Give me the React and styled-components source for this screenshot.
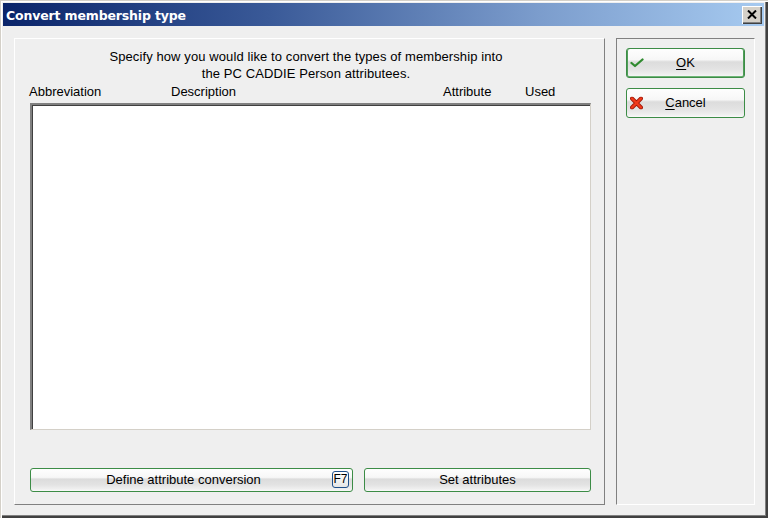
import React from "react";
import styled, { createGlobalStyle } from "styled-components";

const Global = createGlobalStyle`
  html, body { margin: 0; padding: 0; background: #efefef; }
  body { width: 768px; height: 518px; overflow: hidden; font-family: "Liberation Sans", Arial, sans-serif; }
  * { box-sizing: border-box; }
`;

const Window = styled.div`
  width: 768px;
  height: 518px;
  background: #efefef;
  padding: 3px 4px 4px 3px;
  display: flex;
  flex-direction: column;
  box-shadow: inset 1px 1px 0 #d4d0c8, inset 2px 2px 0 #ffffff,
    inset -1px -1px 0 #404040, inset -2px -2px 0 #404040, inset -3px -3px 0 #808080;
`;

const TitleBar = styled.div`
  height: 23px;
  flex: none;
  display: flex;
  align-items: center;
  justify-content: space-between;
  padding: 0 2px 0 3px;
  background: linear-gradient(to right, #0a246a 0%, #3a5a98 35%, #7b9ccc 70%, #a6caf0 100%);
`;

const Title = styled.div`
  color: #ffffff;
  font-family: "DejaVu Sans", Tahoma, sans-serif;
  font-weight: bold;
  font-size: 12.5px;
  letter-spacing: -0.15px;
  padding-top: 1px;
`;

const CloseButton = styled.div`
  width: 20px;
  height: 18px;
  background: #d4d0c8;
  display: flex;
  align-items: center;
  justify-content: center;
  box-shadow: inset 1px 1px 0 #ffffff, inset -1px -1px 0 #404040, inset -2px -2px 0 #808080;
`;

const Body = styled.div`
  flex: 1;
  display: flex;
  gap: 11px;
  padding: 12px 9px 9px 11px;
`;

const LeftPanel = styled.div`
  width: 591px;
  height: 467px;
  border-top: 1px solid #ffffff;
  border-left: 1px solid #ffffff;
  border-right: 1px solid #808080;
  border-bottom: 1px solid #808080;
  padding: 9px 13px 0 15px;
  display: flex;
  flex-direction: column;
`;

const Intro = styled.div`
  font-size: 13px;
  line-height: 17px;
  color: #000;
  text-align: center;
  letter-spacing: 0.1px;
  padding-right: 9px;
`;

const HeaderRow = styled.div`
  display: grid;
  grid-template-columns: 142px 272px 82px 1fr;
  margin-left: -1px;
  margin-top: 1px;
  height: 20px;
  font-size: 13px;
  line-height: 17px;
  color: #000;
`;

const ListBox = styled.div`
  height: 327px;
  background: #ffffff;
  border-top: 2px solid #808080;
  border-left: 2px solid #808080;
  border-right: 1px solid #d4d0c8;
  border-bottom: 1px solid #d4d0c8;
  box-shadow: inset 1px 1px 0 #404040;
`;

const ButtonRow = styled.div`
  display: flex;
  gap: 11px;
  margin-top: 38px;
`;

const GreenButton = styled.div`
  position: relative;
  width: ${(p) => p.$w}px;
  height: ${(p) => p.$h}px;
  border: 1px solid #3c8c46;
  border-radius: 3px;
  background: linear-gradient(
    to bottom,
    #fefefe 0%,
    #f7f7f7 38%,
    #dcdcdc 46%,
    #e3e3e3 72%,
    #f0f0f0 92%,
    #fafafa 100%
  );
  display: flex;
  align-items: center;
  justify-content: center;
  padding: 0 ${(p) => p.$padRight || 0}px 2px 0;
  font-size: 13px;
  color: #000;
  box-shadow: ${(p) => (p.$default ? "inset 1px 0 0 #4f9e58, inset -1px 0 0 #4f9e58, inset 0 -1px 0 #6fb577" : "none")};
  u { text-decoration: underline; text-underline-offset: 2px; }
`;

const KeyBadge = styled.span`
  position: absolute;
  right: 3px;
  top: 2px;
  width: 17px;
  height: 17px;
  border: 1px solid #1f4f8a;
  border-radius: 3px;
  background: linear-gradient(to bottom, #ffffff, #e6e6e6);
  font-size: 12px;
  line-height: 15px;
  text-align: center;
  color: #000;
`;

const ButtonIcon = styled.span`
  position: absolute;
  left: 3px;
  top: 50%;
  transform: translateY(-50%);
  display: flex;
`;

const RightPanel = styled.div`
  width: 139px;
  height: 467px;
  border-top: 1px solid #808080;
  border-left: 1px solid #808080;
  border-right: 1px solid #ffffff;
  border-bottom: 1px solid #ffffff;
  padding: 9px 0 0 9px;
  display: flex;
  flex-direction: column;
  gap: 10px;
`;

const CheckIcon = () => (
  <svg width="14" height="11" viewBox="0 0 14 11">
    <path d="M1.5 5.5 L5 8.5 L12.5 2" fill="none" stroke="#2f8a2f" strokeWidth="2.3" strokeLinecap="round" strokeLinejoin="round" />
  </svg>
);

const CrossIcon = () => (
  <svg width="13" height="13" viewBox="0 0 13 13">
    <path d="M2 2 L11 11 M11 2 L2 11" fill="none" stroke="#a01808" strokeWidth="4" strokeLinecap="round" />
    <path d="M2 2 L11 11 M11 2 L2 11" fill="none" stroke="#f03a1a" strokeWidth="2.4" strokeLinecap="round" />
  </svg>
);

const CloseGlyph = () => (
  <svg width="10" height="9" viewBox="0 0 10 9">
    <path d="M1 0.5 L9 8.5 M9 0.5 L1 8.5" stroke="#000" strokeWidth="2" />
  </svg>
);

export default function App() {
  return (
    <>
      <Global />
      <Window>
        <TitleBar>
          <Title>Convert membership type</Title>
          <CloseButton>
            <CloseGlyph />
          </CloseButton>
        </TitleBar>
        <Body>
          <LeftPanel>
            <Intro>
              Specify how you would like to convert the types of membership into
              <br />
              the PC CADDIE Person attributees.
            </Intro>
            <HeaderRow>
              <span>Abbreviation</span>
              <span>Description</span>
              <span>Attribute</span>
              <span>Used</span>
            </HeaderRow>
            <ListBox />
            <ButtonRow>
              <GreenButton $w={323} $h={24} $padRight={16}>
                Define attribute conversion
                <KeyBadge>F7</KeyBadge>
              </GreenButton>
              <GreenButton $w={227} $h={24}>
                Set attributes
              </GreenButton>
            </ButtonRow>
          </LeftPanel>
          <RightPanel>
            <GreenButton $w={119} $h={30} $default>
              <ButtonIcon>
                <CheckIcon />
              </ButtonIcon>
              <span>
                <u>O</u>K
              </span>
            </GreenButton>
            <GreenButton $w={119} $h={30}>
              <ButtonIcon>
                <CrossIcon />
              </ButtonIcon>
              <span>
                <u>C</u>ancel
              </span>
            </GreenButton>
          </RightPanel>
        </Body>
      </Window>
    </>
  );
}
